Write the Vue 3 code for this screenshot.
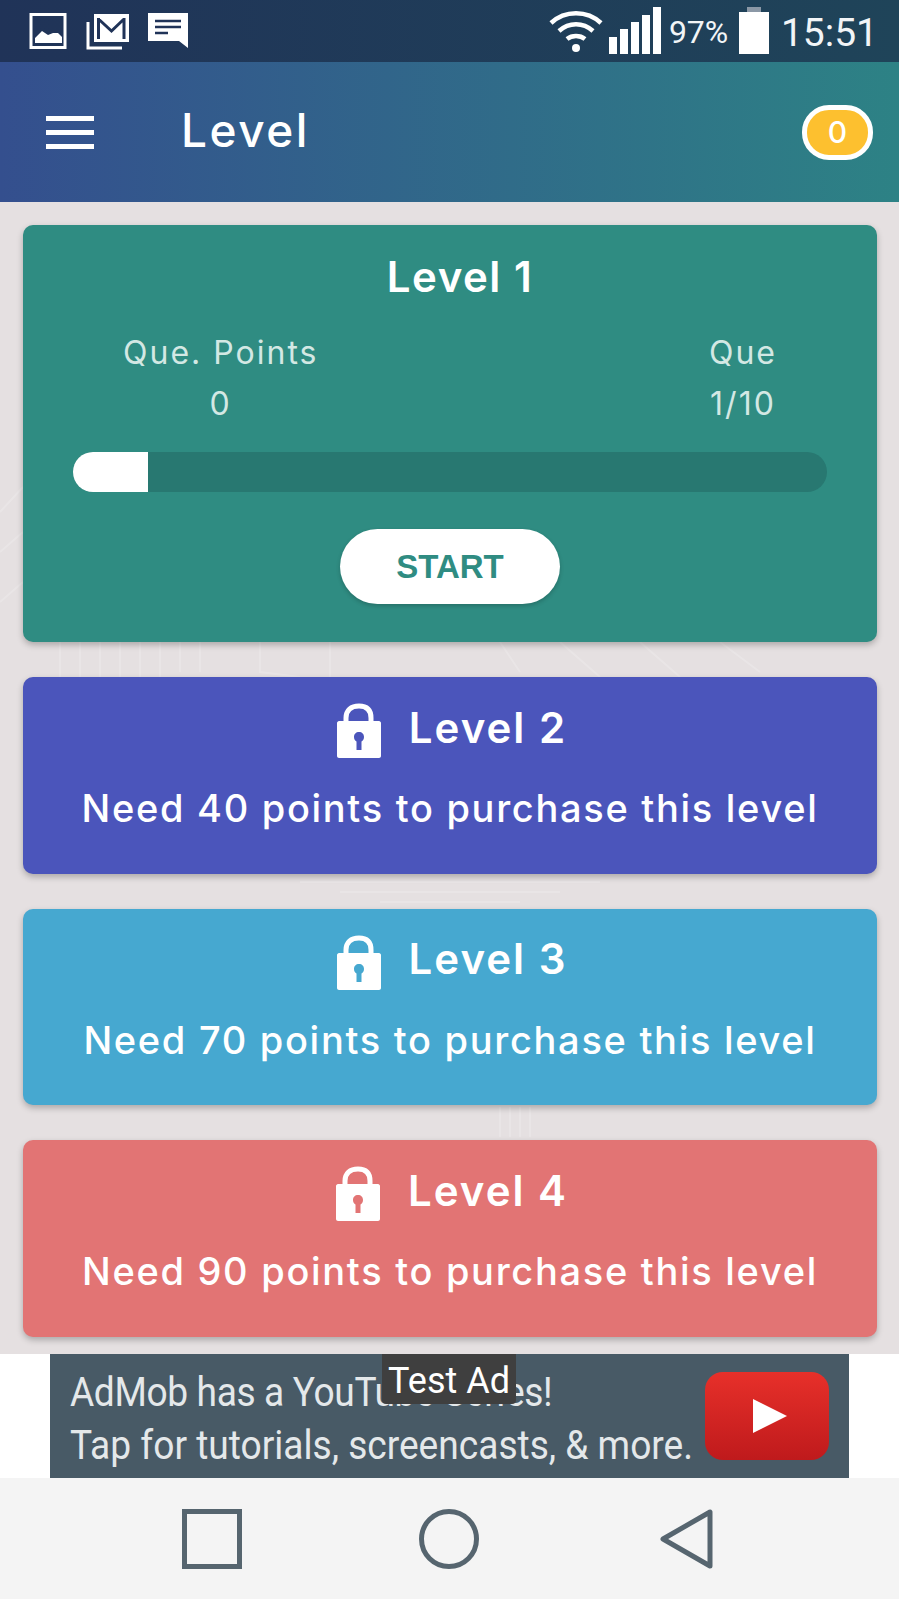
<script setup>
const lockedLevels = [
  { name: 'Level 2', points: 40, color: '#4b55bb' },
  { name: 'Level 3', points: 70, color: '#46a8d0' },
  { name: 'Level 4', points: 90, color: '#e27474' },
];
</script>

<template>
  <div class="screen">
    <div class="status-bar">
      <div class="status-left">
        <svg width="38" height="38" viewBox="0 0 38 38">
          <rect x="2" y="2.500" width="34" height="33" fill="none" stroke="#fff" stroke-width="3" />
          <path d="M6 31V26L13 19L19 23L24 21L29 21L33 25V31Z" fill="#fff" />
        </svg>
        <svg width="43" height="37" viewBox="0 0 43 37">
          <path d="M2 9V35H36" fill="none" stroke="#fff" stroke-width="3" />
          <path d="M8 1H43V29H8Z" fill="#fff" />
          <path d="M12.500 5V26M38 5V26M12.500 6L25.500 18L38 6" fill="none" stroke="#203358" stroke-width="3" />
        </svg>
        <svg width="41" height="36" viewBox="0 0 41 36">
          <path d="M0 0H40V35L31 28H0Z" fill="#fff" />
          <path d="M7 8H33M7 14H33M7 20H20" stroke="#203358" stroke-width="2.400" fill="none" />
        </svg>
      </div>
      <div class="status-right">
        <svg class="wifi" width="54" height="44" viewBox="0 0 54 44">
          <path d="M2 13C16 0 38 0 52 13M10 21C20 12 34 12 44 21M18 29C23 25 31 25 36 29" fill="none" stroke="#fff" stroke-width="4.500" />
          <circle cx="27" cy="38" r="4" fill="#fff" />
        </svg>
        <div class="signal">
          <span class="s1"></span><span class="s2"></span><span class="s3"></span><span class="s4"></span><span class="s5"></span>
        </div>
        <span class="battery-pct">97%</span>
        <div class="battery"><span class="battery-cap"></span></div>
        <span class="clock">15:51</span>
      </div>
    </div>

    <header class="app-bar">
      <div class="burger"><span></span><span></span><span></span></div>
      <h1 class="app-title">Level</h1>
      <div class="coin">0</div>
    </header>

    <main class="content">
      <svg class="circuit" width="899" height="1152" viewBox="0 0 899 1152">
        <g fill="none" stroke="#fff" stroke-opacity="0.18" stroke-width="2">
          <path d="M0 310L23 285M0 350L23 330M0 400L23 380" />
          <path d="M60 440V475M80 440V475M100 440V475M120 440V475M140 440V475M160 440V475M180 440V470M200 440V470" />
          <path d="M260 440V470L300 475M330 440V475M500 440L520 470M560 440L600 475M640 440L680 475M720 440L760 470" />
          <path d="M300 680H600M340 690H560M380 700H520" />
          <path d="M500 905V935M510 905V935M520 905V935M530 905V935" />
        </g>
      </svg>

      <section class="card card-open">
        <h2 class="open-title">Level 1</h2>
        <div class="stats">
          <div class="stat">
            <span>Que. Points</span>
            <span>0</span>
          </div>
          <div class="stat">
            <span>Que</span>
            <span>1/10</span>
          </div>
        </div>
        <div class="progress"><div class="progress-fill" :style="{ width: '10%' }"></div></div>
        <button type="button" class="start-btn">START</button>
      </section>

      <section
        v-for="level in lockedLevels"
        :key="level.name"
        class="card card-locked"
        :style="{ background: level.color }"
      >
        <div class="locked-head">
          <svg width="44" height="55" viewBox="0 0 44 55">
            <path d="M9 22V15C9 7 14 3 22 3C30 3 34 7 34 15V22" fill="none" stroke="#fff" stroke-width="5" />
            <path fill-rule="evenodd" d="M2 18H42C43 18 44 19 44 20V53C44 54 43 55 42 55H2C1 55 0 54 0 53V20C0 19 1 18 2 18ZM22 29C19 29 17 31 17 34C17 36 18 37.500 19.500 38.500V47H24.500V38.500C26 37.500 27 36 27 34C27 31 25 29 22 29Z" fill="#fff" />
          </svg>
          <h2 class="locked-title">{{ level.name }}</h2>
        </div>
        <p class="locked-text">Need {{ level.points }} points to purchase this level</p>
      </section>
    </main>

    <div class="ad-strip">
      <div class="ad">
        <div class="ad-text">
          <div class="ad-line-1">AdMob has a YouTube Series!</div>
          <div>Tap for tutorials, screencasts, &amp; more.</div>
        </div>
        <div class="yt"><span class="yt-play"></span></div>
        <div class="test-ad">Test Ad</div>
      </div>
    </div>

    <nav class="nav-bar">
      <svg width="60" height="60" viewBox="0 0 60 60">
        <rect x="2.500" y="2.500" width="55" height="55" fill="none" stroke="#56656f" stroke-width="5" />
      </svg>
      <svg width="60" height="60" viewBox="0 0 60 60">
        <circle cx="30" cy="30" r="27.500" fill="none" stroke="#56656f" stroke-width="5" />
      </svg>
      <svg class="nav-back" width="54" height="60" viewBox="0 0 54 60">
        <path d="M50 3V57L3 30Z" fill="none" stroke="#56656f" stroke-width="5" stroke-linejoin="round" />
      </svg>
    </nav>
  </div>
</template>

<style>
html, body {
  margin: 0;
  padding: 0;
}
</style>

<style scoped>
.screen {
  width: 899px;
  height: 1599px;
  display: flex;
  flex-direction: column;
  overflow: hidden;
  font-family: "Inter", "Open Sans", sans-serif;
  color: #fff;
}

.status-bar {
  height: 62px;
  flex: none;
  display: flex;
  align-items: flex-end;
  justify-content: space-between;
  padding: 0 21px 8px 29px;
  box-sizing: border-box;
  background: linear-gradient(90deg, #203358, #1f4459);
  font-family: "Roboto", sans-serif;
}

.status-left {
  display: flex;
  align-items: center;
  gap: 19px;
  padding-bottom: 4px;
}

.status-right {
  display: flex;
  align-items: flex-end;
}

.signal {
  display: flex;
  align-items: flex-end;
  gap: 3px;
  margin: 0 8px 0 6px;
}

.signal span {
  width: 8px;
  background: #fff;
}

.s1 { height: 17px; }
.s2 { height: 25px; }
.s3 { height: 32px; }
.s4 { height: 39px; }
.s5 { height: 47px; }

.battery-pct {
  font-size: 32px;
  line-height: 38px;
  width: 60px;
  margin-bottom: 3px;
  color: #f2f5f7;
  white-space: nowrap;
}

.battery {
  position: relative;
  width: 30px;
  height: 42px;
  margin: 0 12px 0 10px;
  background: #fff;
}

.battery-cap {
  position: absolute;
  top: -5px;
  left: 8px;
  width: 14px;
  height: 5px;
  background: #8b98a6;
}

.clock {
  font-size: 39px;
  line-height: 46px;
  margin-bottom: -2px;
  color: #f2f5f7;
}

.app-bar {
  height: 140px;
  flex: none;
  display: flex;
  align-items: center;
  padding: 0 26px 0 46px;
  box-sizing: border-box;
  background: linear-gradient(90deg, #344f8e, #2d8285);
}

.burger {
  display: flex;
  flex-direction: column;
  gap: 9px;
  width: 48px;
}

.burger span {
  height: 5px;
  background: #fff;
}

.app-title {
  flex: 1;
  margin: 0 0 4px 87px;
  font-size: 46px;
  font-weight: 500;
  letter-spacing: 2.500px;
}

.coin {
  width: 71px;
  height: 55px;
  box-sizing: border-box;
  border: 5px solid #fff;
  border-radius: 27px;
  background: #fdc02f;
  font-size: 30px;
  font-weight: 500;
  line-height: 44px;
  text-align: center;
}

.content {
  position: relative;
  flex: 1;
  min-height: 0;
  display: flex;
  flex-direction: column;
  gap: 35px;
  padding: 23px 22px 0 23px;
  box-sizing: border-box;
  background: #e5e0e1;
  overflow: hidden;
}

.circuit {
  position: absolute;
  top: 0;
  left: 0;
}

.card {
  position: relative;
  flex: none;
  border-radius: 10px;
  box-shadow: 0 3px 6px rgba(0, 0, 0, 0.25);
  text-align: center;
}

.card-open {
  height: 417px;
  box-sizing: border-box;
  padding-top: 28px;
  background: #2f8c82;
}

.open-title {
  margin: 0;
  padding-left: 20px;
  font-size: 42px;
  line-height: 48px;
  font-weight: 600;
  letter-spacing: 1.500px;
}

.stats {
  display: flex;
  justify-content: space-between;
  padding: 0 100px;
  margin-top: 33px;
}

.stat {
  display: flex;
  flex-direction: column;
  gap: 14px;
  font-size: 32px;
  line-height: 37px;
  letter-spacing: 2px;
  color: #d3e8e4;
}

.progress {
  height: 40px;
  margin: 30px 50px 0;
  border-radius: 20px;
  overflow: hidden;
  background: #287871;
}

.progress-fill {
  height: 100%;
  background: #fff;
}

.start-btn {
  display: block;
  width: 220px;
  height: 75px;
  margin: 37px auto 0;
  border: none;
  border-radius: 38px;
  background: #fff;
  color: #2f8c82;
  font-family: "Liberation Sans", sans-serif;
  font-size: 33px;
  font-weight: 700;
  box-shadow: 0 2px 4px rgba(0, 0, 0, 0.2);
}

.card-locked {
  height: 196.500px;
  padding-top: 26px;
  box-sizing: border-box;
}

.locked-head {
  display: flex;
  justify-content: center;
  align-items: center;
  gap: 28px;
  padding-left: 4px;
}

.locked-title {
  margin: 0 0 6px;
  font-size: 42px;
  line-height: 46px;
  font-weight: 600;
  letter-spacing: 2px;
}

.locked-text {
  margin: 27px 0 0;
  font-size: 38px;
  line-height: 46px;
  font-weight: 500;
  letter-spacing: 1.700px;
  white-space: nowrap;
}

.ad-strip {
  height: 124px;
  flex: none;
  padding: 0 50px;
  background: #fff;
}

.ad {
  position: relative;
  height: 124px;
  display: flex;
  align-items: center;
  padding: 0 20px;
  background: #485a66;
  font-family: "Roboto", sans-serif;
}

.ad-text {
  flex: 1;
  min-width: 0;
  padding-top: 5px;
  font-size: 41px;
  line-height: 53px;
  color: #e4e8ea;
  white-space: nowrap;
  transform: scaleX(0.905);
  transform-origin: left center;
}

.ad-line-1 {
  letter-spacing: -0.400px;
}

.yt {
  flex: none;
  width: 124px;
  height: 88px;
  display: flex;
  align-items: center;
  justify-content: center;
  border-radius: 18px;
  background: linear-gradient(180deg, #e7302a, #bf1a1c);
}

.yt-play {
  width: 0;
  height: 0;
  margin-left: 6px;
  border-left: 34px solid #fff;
  border-top: 17px solid transparent;
  border-bottom: 17px solid transparent;
}

.test-ad {
  position: absolute;
  top: 0;
  left: 332px;
  width: 134px;
  height: 50px;
  border-radius: 0 0 4px 4px;
  background: #3f3f3f;
  font-size: 36px;
  line-height: 54px;
  text-align: center;
  color: #fff;
}

.nav-bar {
  height: 121px;
  flex: none;
  display: flex;
  align-items: center;
  gap: 177px;
  padding-left: 182px;
  box-sizing: border-box;
  background: #f4f4f4;
}

.nav-back {
  margin-left: 4px;
}
</style>
